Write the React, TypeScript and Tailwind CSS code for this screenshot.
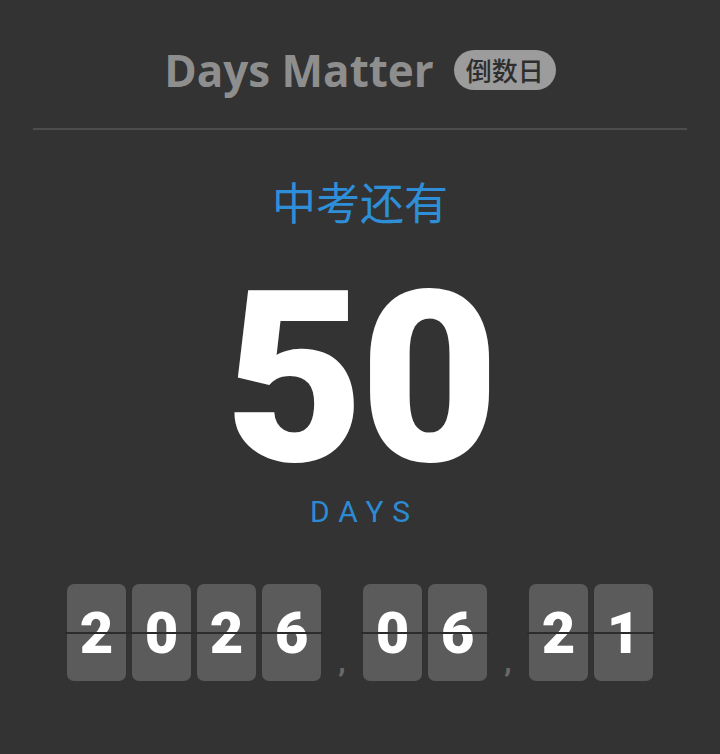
import React from 'react';

const groups = [['2', '0', '2', '6'], ['0', '6'], ['2', '1']];

function FlipGroup({ digits }: { digits: string[] }) {
  return (
    <div className="relative flex gap-[6px]">
      {digits.map((d, i) => (
        <div
          key={i}
          className="w-[59px] h-[97px] rounded-[7px] bg-[#5b5b5b] flex items-center justify-center text-white text-[58px] font-black leading-none font-['Roboto',sans-serif]"
        >
          {d}
        </div>
      ))}
      {/* flip seam */}
      <div className="absolute left-[-2px] right-[-2px] top-[48px] h-[2px] bg-[#2c2c2c]" />
    </div>
  );
}

export default function App() {
  return (
    <div className="w-[720px] h-[754px] bg-[#333333] flex flex-col overflow-hidden">
      {/* Header */}
      <div className="h-[128px] pt-[12px] flex items-center justify-center gap-[20px]">
        <span className="text-[44px] font-bold text-[#8e8e8e] leading-none font-['Open_Sans',sans-serif]">
          Days Matter
        </span>
        <span className="h-[40px] px-[12px] rounded-full bg-[#9c9c9c] text-[#2e2e2e] text-[26px] font-medium flex items-center leading-none font-['Noto_Sans_CJK_SC',sans-serif]">
          倒数日
        </span>
      </div>
      <div className="mx-[33px] h-[2px] bg-[#4d4d4d]" />

      {/* Countdown */}
      <div className="mt-[49px] text-center text-[44px] leading-[44px] text-[#2f8ed8] font-['Noto_Sans_CJK_SC',sans-serif]">
        中考还有
      </div>
      <div className="mt-[38px] text-center text-[240px] leading-[236px] font-black text-white tracking-[-4px] font-['Roboto',sans-serif]">
        50
      </div>
      <div className="text-center text-[30px] leading-none text-[#2d8bd4] tracking-[9px] pl-[9px] font-['Roboto',sans-serif]">
        DAYS
      </div>

      {/* Target date */}
      <div className="mt-[57px] flex justify-center gap-[6px]">
        {groups.map((g, i) => (
          <React.Fragment key={i}>
            {i > 0 && (
              <div className="w-[30px] flex items-end justify-center pb-[4px] text-[30px] leading-none text-[#6a6a6a] font-bold font-['Roboto',sans-serif]">
                ,
              </div>
            )}
            <FlipGroup digits={g} />
          </React.Fragment>
        ))}
      </div>
    </div>
  );
}
